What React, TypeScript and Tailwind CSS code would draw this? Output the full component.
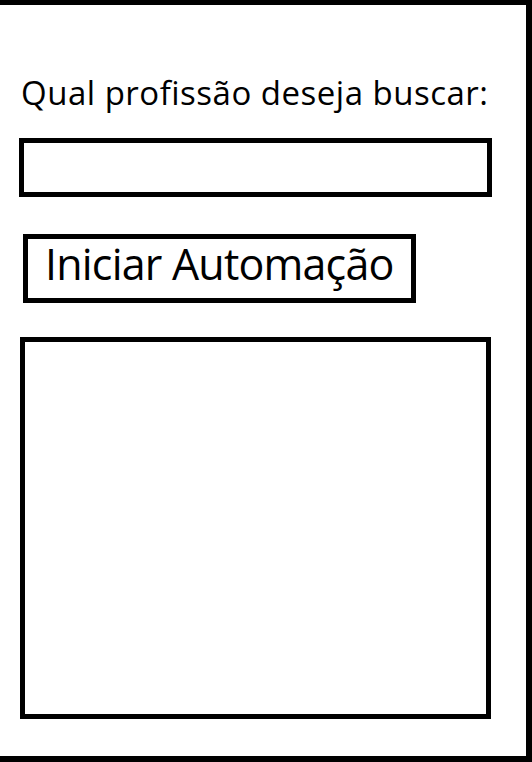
export default function App() {
  return (
    <div className="w-[532px] h-[762px] bg-white border-t-[5px] border-r-[6px] border-b-[6px] border-black font-['Open_Sans',sans-serif] text-black">
      <div className="flex flex-col">
        <label className="mt-[70px] ml-[21px] text-[33px] leading-[36px] tracking-[0.5px] whitespace-nowrap">
          Qual profissão deseja buscar:
        </label>
        <input
          type="text"
          className="mt-[27px] ml-[19px] w-[473px] h-[59px] border-[5px] border-black outline-none bg-white"
        />
        <button className="mt-[37px] ml-[23px] w-[393px] h-[69px] border-[5px] border-black bg-white text-left pl-[17px] text-[43px] leading-[49px] tracking-[-0.8px] whitespace-nowrap self-start flex items-start">
          Iniciar Automação
        </button>
        <div className="mt-[34px] ml-[20px] w-[471px] h-[382px] border-[5px] border-black" />
      </div>
    </div>
  );
}
